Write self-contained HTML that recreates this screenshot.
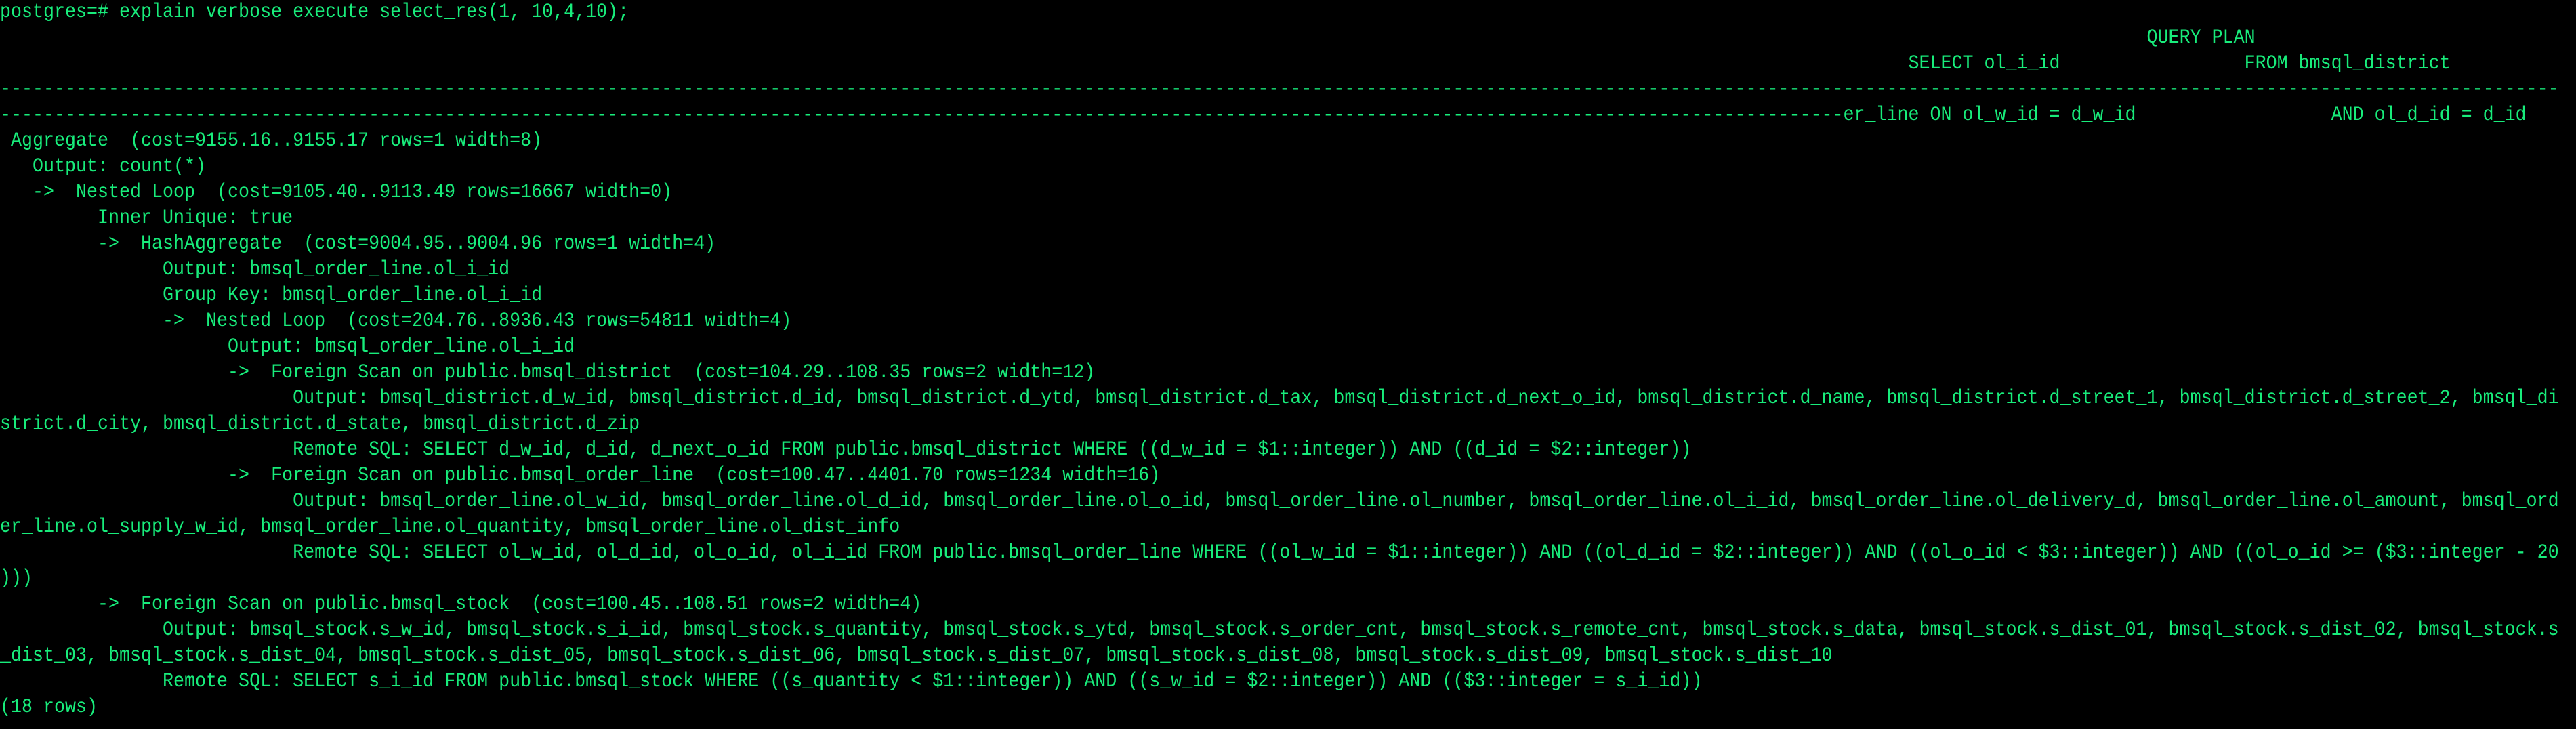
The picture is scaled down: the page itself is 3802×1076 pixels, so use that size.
<!DOCTYPE html>
<html><head><meta charset="utf-8"><style>
html,body{margin:0;padding:0;background:#000;width:3802px;height:1076px;overflow:hidden}
pre{margin:0;position:absolute;left:0;top:-1px;font-family:"Liberation Mono",monospace;font-size:30px;line-height:38px;color:#18ec7b;white-space:pre;transform:scaleX(0.8889);transform-origin:0 0}
</style></head><body><pre>postgres=# explain verbose execute select_res(1, 10,4,10);
                                                                                                                                                                                                      QUERY PLAN
                                                                                                                                                                                SELECT ol_i_id                 FROM bmsql_district
--------------------------------------------------------------------------------------------------------------------------------------------------------------------------------------------------------------------------------------------
--------------------------------------------------------------------------------------------------------------------------------------------------------------------------er_line ON ol_w_id = d_w_id                  AND ol_d_id = d_id
 Aggregate  (cost=9155.16..9155.17 rows=1 width=8)
   Output: count(*)
   ->  Nested Loop  (cost=9105.40..9113.49 rows=16667 width=0)
         Inner Unique: true
         ->  HashAggregate  (cost=9004.95..9004.96 rows=1 width=4)
               Output: bmsql_order_line.ol_i_id
               Group Key: bmsql_order_line.ol_i_id
               ->  Nested Loop  (cost=204.76..8936.43 rows=54811 width=4)
                     Output: bmsql_order_line.ol_i_id
                     ->  Foreign Scan on public.bmsql_district  (cost=104.29..108.35 rows=2 width=12)
                           Output: bmsql_district.d_w_id, bmsql_district.d_id, bmsql_district.d_ytd, bmsql_district.d_tax, bmsql_district.d_next_o_id, bmsql_district.d_name, bmsql_district.d_street_1, bmsql_district.d_street_2, bmsql_di
strict.d_city, bmsql_district.d_state, bmsql_district.d_zip
                           Remote SQL: SELECT d_w_id, d_id, d_next_o_id FROM public.bmsql_district WHERE ((d_w_id = $1::integer)) AND ((d_id = $2::integer))
                     ->  Foreign Scan on public.bmsql_order_line  (cost=100.47..4401.70 rows=1234 width=16)
                           Output: bmsql_order_line.ol_w_id, bmsql_order_line.ol_d_id, bmsql_order_line.ol_o_id, bmsql_order_line.ol_number, bmsql_order_line.ol_i_id, bmsql_order_line.ol_delivery_d, bmsql_order_line.ol_amount, bmsql_ord
er_line.ol_supply_w_id, bmsql_order_line.ol_quantity, bmsql_order_line.ol_dist_info
                           Remote SQL: SELECT ol_w_id, ol_d_id, ol_o_id, ol_i_id FROM public.bmsql_order_line WHERE ((ol_w_id = $1::integer)) AND ((ol_d_id = $2::integer)) AND ((ol_o_id &lt; $3::integer)) AND ((ol_o_id &gt;= ($3::integer - 20
)))
         ->  Foreign Scan on public.bmsql_stock  (cost=100.45..108.51 rows=2 width=4)
               Output: bmsql_stock.s_w_id, bmsql_stock.s_i_id, bmsql_stock.s_quantity, bmsql_stock.s_ytd, bmsql_stock.s_order_cnt, bmsql_stock.s_remote_cnt, bmsql_stock.s_data, bmsql_stock.s_dist_01, bmsql_stock.s_dist_02, bmsql_stock.s
_dist_03, bmsql_stock.s_dist_04, bmsql_stock.s_dist_05, bmsql_stock.s_dist_06, bmsql_stock.s_dist_07, bmsql_stock.s_dist_08, bmsql_stock.s_dist_09, bmsql_stock.s_dist_10
               Remote SQL: SELECT s_i_id FROM public.bmsql_stock WHERE ((s_quantity &lt; $1::integer)) AND ((s_w_id = $2::integer)) AND (($3::integer = s_i_id))
(18 rows)</pre></body></html>
